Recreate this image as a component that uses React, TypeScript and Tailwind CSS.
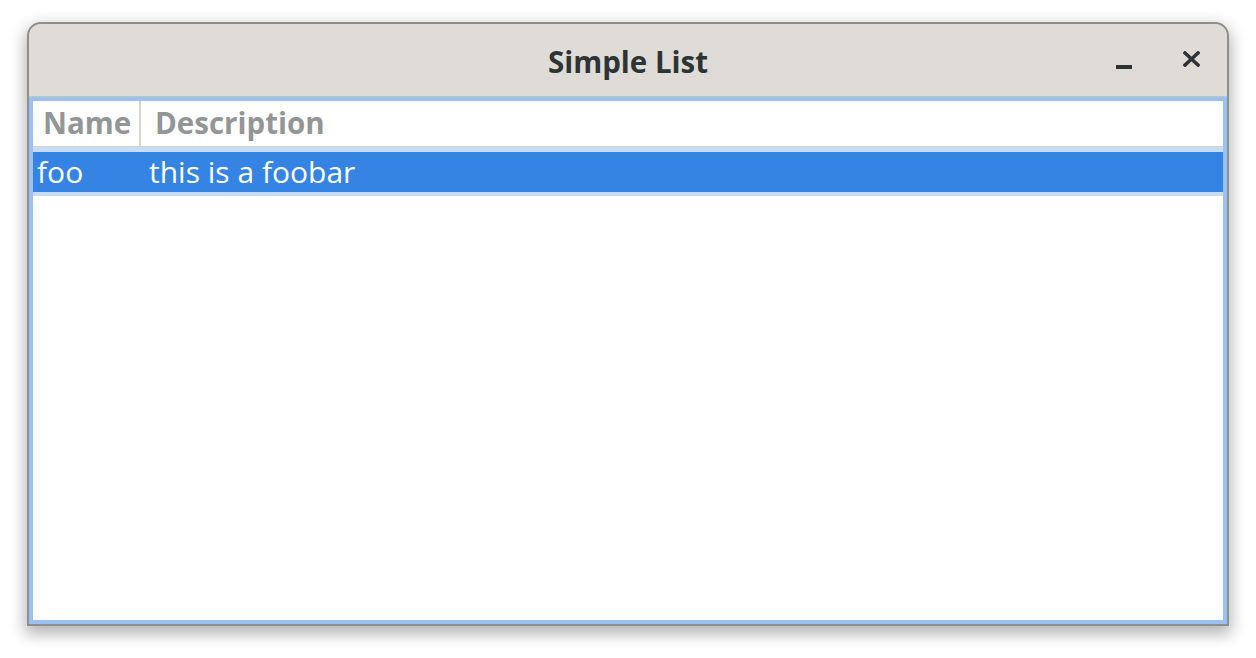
import React from 'react';

const rows = [{ name: 'foo', description: 'this is a foobar' }];

const App: React.FC = () => {
    return (
        <div className="w-[1256px] h-[658px] bg-white pt-[22px] pl-[27px] font-['Open_Sans',sans-serif]">
            <div className="w-[1202px] h-[604px] flex flex-col rounded-t-[14px] border-2 border-[#8e8e8e] bg-[#dfdcd8] shadow-[0_6px_16px_2px_rgba(0,0,0,0.3)] overflow-hidden">

                {/* Titlebar */}
                <div className="relative h-[73px] shrink-0 flex items-center justify-center pt-[3px] border-b border-[#c4c0bb] bg-[#dfdcd8]">
                    <span className="text-[29.5px] font-bold text-[#2e3436] leading-none">Simple List</span>
                    <div className="absolute right-[27px] top-0 h-full flex items-center gap-[51px]">
                        <span className="block w-[16px] h-[4px] bg-[#2e3436] mt-[14px]" />
                        <svg width="17" height="16" viewBox="0 0 17 16" className="mt-[-2px]">
                            <path d="M2 2 L15 14 M15 2 L2 14" stroke="#2e3436" strokeWidth="3.6" strokeLinecap="square" />
                        </svg>
                    </div>
                </div>

                {/* Tree view with focus frame */}
                <div className="flex-1 flex flex-col border-4 border-[#99c1f1] bg-white">
                    <div className="h-[46px] shrink-0 flex border-b border-[#d6d3cf] text-[29.5px] font-bold text-[#939696]">
                        <div className="w-[108px] pl-[10px] flex items-center border-r-2 border-[#d6d3cf]">Name</div>
                        <div className="flex-1 pl-[14px] flex items-center">Description</div>
                    </div>
                    {rows.map((row) => (
                        <div key={row.name} className="bg-[#c6dcf8] pt-[5px] pb-[4px]">
                            <div className="h-[40px] flex items-center bg-[#3584e4] text-white text-[30px] leading-none">
                                <div className="w-[109px] pl-[4px]">{row.name}</div>
                                <div className="flex-1 pl-[7px]">{row.description}</div>
                            </div>
                        </div>
                    ))}
                </div>
            </div>
        </div>
    );
};

export default App;
